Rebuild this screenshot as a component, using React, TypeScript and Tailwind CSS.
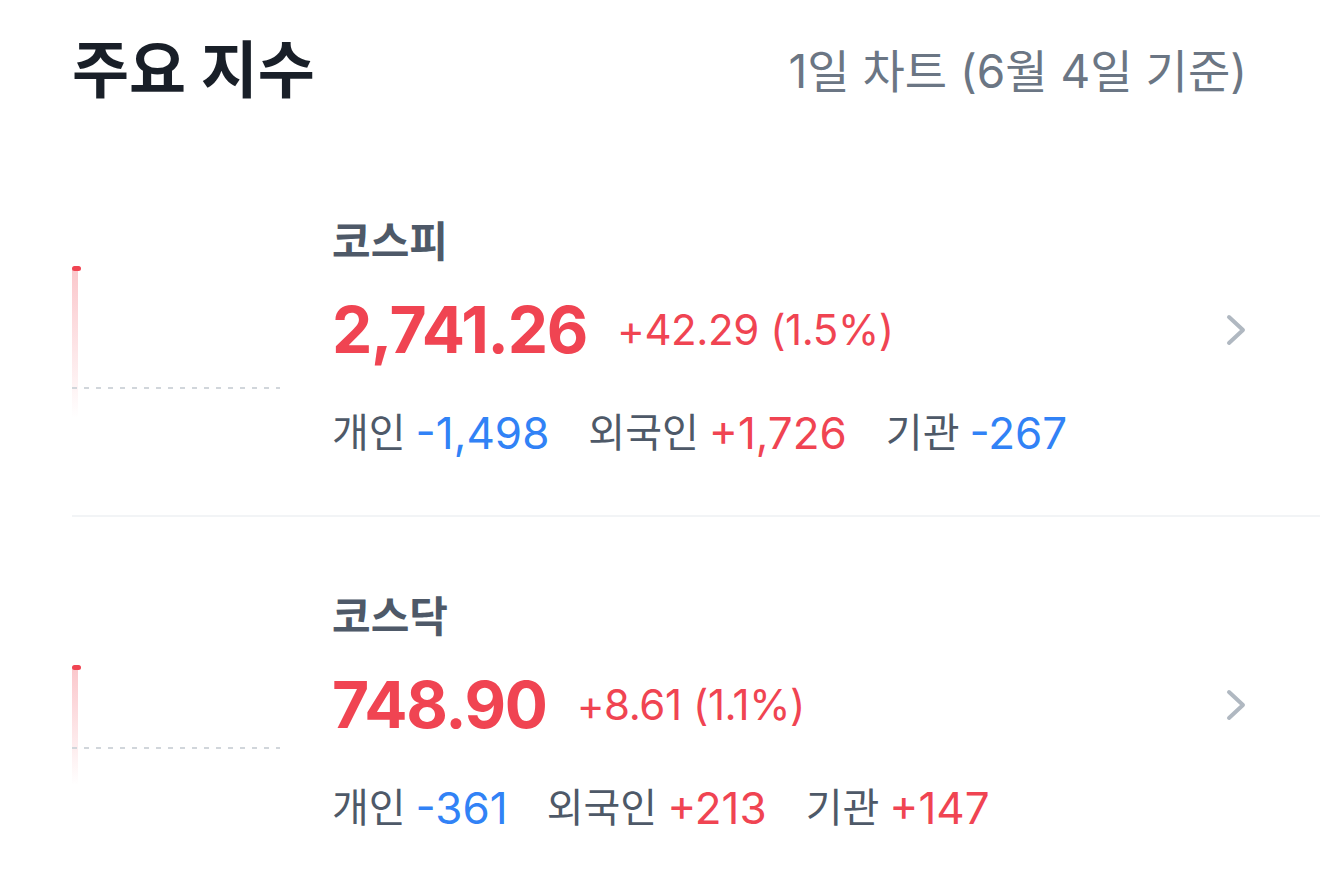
import React from "react";

type Flow = { label: string; value: string; up: boolean };

type IndexItem = {
  name: string;
  price: string;
  change: string;
  flows: Flow[];
  chart: { markerY: number; dotY: number; fadeY: number };
};

const items: IndexItem[] = [
  {
    name: "코스피",
    price: "2,741.26",
    change: "+42.29 (1.5%)",
    flows: [
      { label: "개인", value: "-1,498", up: false },
      { label: "외국인", value: "+1,726", up: true },
      { label: "기관", value: "-267", up: false },
    ],
    chart: { markerY: 50, dotY: 170, fadeY: 200 },
  },
  {
    name: "코스닥",
    price: "748.90",
    change: "+8.61 (1.1%)",
    flows: [
      { label: "개인", value: "-361", up: false },
      { label: "외국인", value: "+213", up: true },
      { label: "기관", value: "+147", up: true },
    ],
    chart: { markerY: 74, dotY: 155, fadeY: 192 },
  },
];

function MiniChart({ id, markerY, dotY, fadeY }: { id: string; markerY: number; dotY: number; fadeY: number }) {
  return (
    <svg width="208" height="241" viewBox="0 0 208 241" className="shrink-0">
      <defs>
        <linearGradient id={id} x1="0" y1="0" x2="0" y2="1">
          <stop offset="0" stopColor="#f04452" stopOpacity="0.3" />
          <stop offset="1" stopColor="#f04452" stopOpacity="0" />
        </linearGradient>
      </defs>
      <rect x="0" y={markerY} width="6" height={fadeY - markerY} fill={`url(#${id})`} />
      <line x1="0" x2="208" y1={dotY} y2={dotY} stroke="#d1d6db" strokeWidth="2" strokeDasharray="5 7" />
      <rect x="0" y={markerY - 2} width="9" height="5" rx="2.5" fill="#f04452" />
    </svg>
  );
}

function Chevron() {
  return (
    <svg width="22" height="32" viewBox="0 0 22 32" fill="none" className="shrink-0">
      <path d="M3 3 L17 16 L3 29" stroke="#b0b8c1" strokeWidth="4" strokeLinecap="round" strokeLinejoin="round" />
    </svg>
  );
}

function IndexRow({ item, idx }: { item: IndexItem; idx: number }) {
  return (
    <div className="flex items-start pl-[72px] pr-[72px] pt-[76px] pb-[56px]">
      <MiniChart id={`fill-${idx}`} {...item.chart} />
      <div className="ml-[52px] flex flex-1 flex-col">
        <div className="h-[48px] flex items-center text-[42px] font-bold text-[#4e5968] leading-none">
          {item.name}
        </div>
        <div className="mt-[24px] h-[80px] flex items-center">
          <span className="text-[64px] font-bold tracking-[-0.02em] text-[#f04452] leading-none">
            {item.price}
          </span>
          <span className="ml-[30px] text-[42px] tracking-[-0.01em] text-[#f04452] leading-none">{item.change}</span>
          <div className="ml-auto">
            <Chevron />
          </div>
        </div>
        <div className="mt-[37px] h-[52px] flex items-center gap-[39px]">
          {item.flows.map((f) => (
            <div key={f.label} className="flex items-center gap-[10px] leading-none">
              <span className="text-[40px] text-[#4e5968]">{f.label}</span>
              <span className={`text-[44px] ${f.up ? "text-[#f04452]" : "text-[#3182f6]"}`}>{f.value}</span>
            </div>
          ))}
        </div>
      </div>
    </div>
  );
}

export default function App() {
  return (
    <div className="min-h-[887px] w-full bg-white font-[family-name:Inter,'Noto_Sans_CJK_KR',sans-serif] antialiased">
      <div className="h-[142px] flex items-center justify-between pl-[72px] pr-[73px]">
        <h1 className="text-[62px] font-bold text-[#191f28] leading-none">주요 지수</h1>
        <span className="text-[46px] text-[#6b7684] leading-none">1일 차트 (6월 4일 기준)</span>
      </div>
      <IndexRow item={items[0]} idx={0} />
      <div className="ml-[72px] h-[2px] bg-[#f2f4f6]" />
      <IndexRow item={items[1]} idx={1} />
    </div>
  );
}
